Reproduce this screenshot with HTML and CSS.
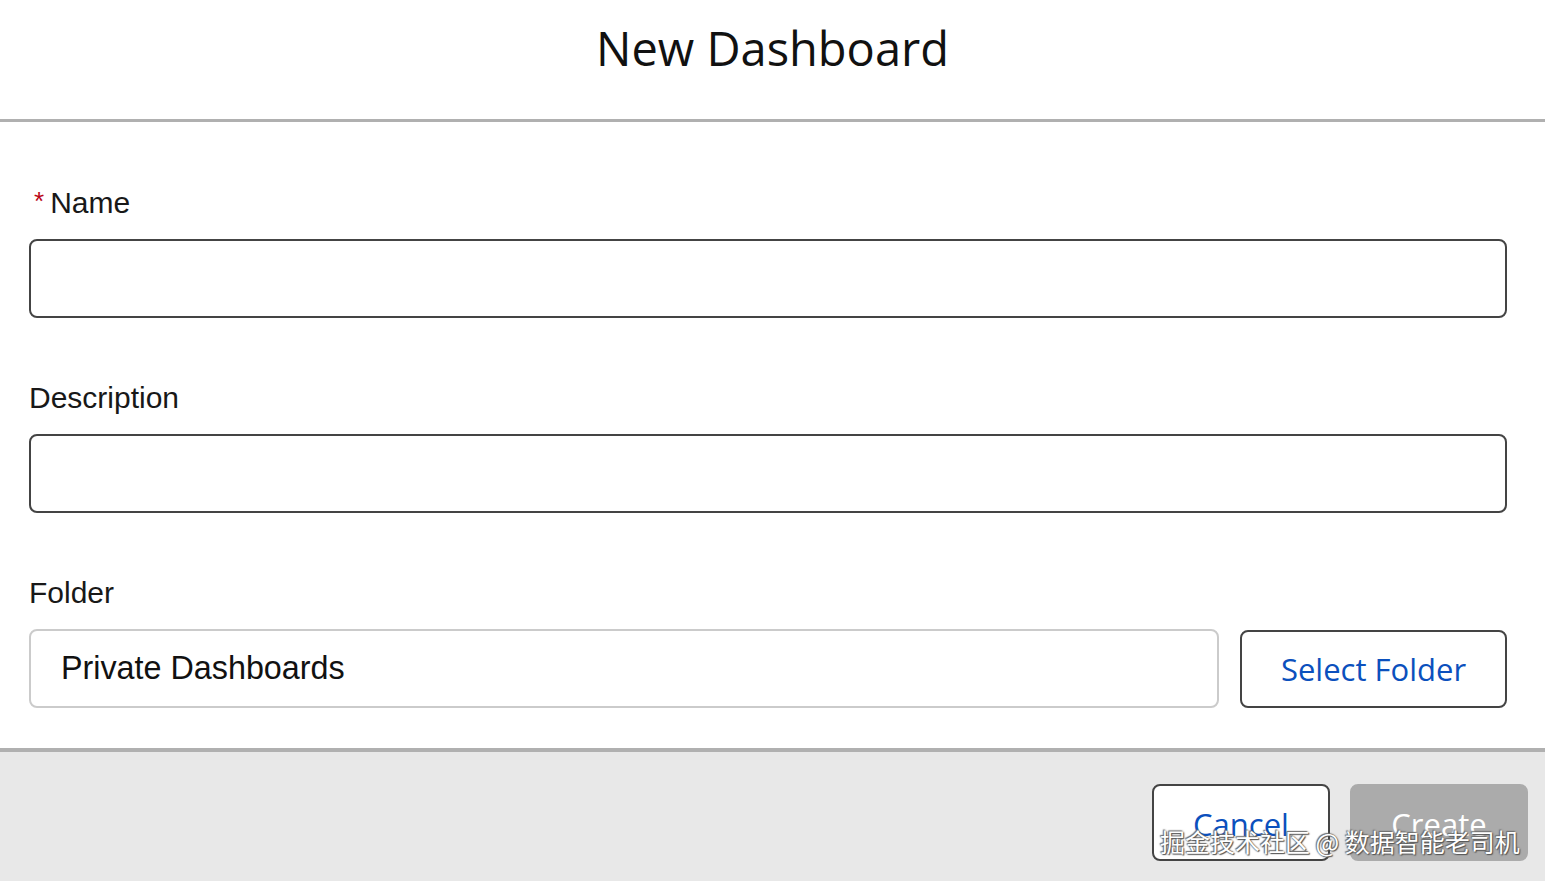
FILE: index.html
```html
<!DOCTYPE html>
<html lang="en">
<head>
<meta charset="utf-8">
<title>New Dashboard</title>
<link rel="stylesheet" href="styles.css">
</head>
<body>
<div class="modal">
  <header class="modal-header">
    <h1 class="modal-title">New Dashboard</h1>
  </header>
  <main class="modal-body">
    <div class="field">
      <label class="field-label"><abbr class="required" title="required">*</abbr>Name</label>
      <input class="text-input" type="text">
    </div>
    <div class="field">
      <label class="field-label">Description</label>
      <input class="text-input" type="text">
    </div>
    <div class="field">
      <label class="field-label">Folder</label>
      <div class="folder-row">
        <div class="folder-input">Private Dashboards</div>
        <button class="btn btn-neutral btn-folder" type="button">Select Folder</button>
      </div>
    </div>
  </main>
  <footer class="modal-footer">
    <button class="btn btn-neutral btn-footer" type="button">Cancel</button>
    <button class="btn btn-disabled btn-footer" type="button">Create</button>
    <div class="watermark">掘金技术社区 @ 数据智能老司机</div>
  </footer>
</div>
</body>
</html>
```

FILE: styles.css
```css
html, body {
  margin: 0;
  padding: 0;
  background: #ffffff;
}

.modal {
  width: 1545px;
  height: 881px;
  display: flex;
  flex-direction: column;
  overflow: hidden;
}

.modal-header {
  height: 119px;
  flex: none;
  border-bottom: 3px solid #b0b0b0;
  display: flex;
  justify-content: center;
  align-items: flex-start;
}

.modal-title {
  margin: 0;
  padding-top: 15px;
  font-family: "Open Sans", "Noto Sans", sans-serif;
  font-weight: 400;
  font-size: 47px;
  line-height: 66px;
  color: #111111;
}

.modal-body {
  padding: 64px 38px 40px 29px;
  display: flex;
  flex-direction: column;
  gap: 63px;
}

.field {
  display: flex;
  flex-direction: column;
  gap: 19px;
}

.field-label {
  font-family: "Liberation Sans", Arial, sans-serif;
  font-size: 30px;
  line-height: 34px;
  color: #181818;
  display: block;
}

.required {
  color: #ba0517;
  text-decoration: none;
  border: 0;
  font-size: 26px;
  line-height: 0;
  margin: 0 6px 0 5px;
  position: relative;
  top: -3px;
}

.text-input {
  box-sizing: border-box;
  width: 100%;
  height: 79px;
  margin: 0;
  border: 2px solid #444444;
  border-radius: 8px;
  background: #ffffff;
  font-family: "Liberation Sans", Arial, sans-serif;
  font-size: 32px;
  padding: 0 30px;
  outline: none;
}

.folder-row {
  display: flex;
  gap: 21px;
  align-items: flex-start;
}

.folder-input {
  box-sizing: border-box;
  flex: 1;
  height: 79px;
  border: 2px solid #cbcbcb;
  border-radius: 8px;
  padding: 0 30px;
  display: flex;
  align-items: center;
  font-family: "Liberation Sans", Arial, sans-serif;
  font-size: 32.3px;
  color: #111111;
}

.btn {
  box-sizing: border-box;
  margin: 0;
  border-radius: 8px;
  font-family: "Open Sans", "Noto Sans", sans-serif;
  font-weight: 400;
  font-size: 31px;
  display: flex;
  align-items: center;
  justify-content: center;
  padding: 0;
  cursor: pointer;
}

.btn-neutral {
  background: #ffffff;
  border: 2px solid #444444;
  color: #0b50bd;
}

.btn-folder {
  width: 267px;
  height: 78px;
  margin-top: 1px;
}

.modal-footer {
  position: relative;
  flex: 1;
  background: #e8e8e8;
  border-top: 4px solid #b0b0b0;
  display: flex;
  justify-content: flex-end;
  align-items: flex-start;
  gap: 20px;
  padding: 32px 17px 0 0;
}

.btn-footer {
  width: 178px;
  height: 77px;
  padding-top: 2px;
}

.btn-disabled {
  background: #ababab;
  border: 2px solid #ababab;
  color: #ffffff;
  cursor: default;
}

.watermark {
  position: absolute;
  left: 1160px;
  top: 72px;
  font-family: "Noto Sans CJK SC", sans-serif;
  font-size: 25px;
  line-height: 34px;
  color: #ffffff;
  white-space: nowrap;
  text-shadow: 0 0 2px #555555, 1px 1px 1px #555555, -1px -1px 1px #777777;
  pointer-events: none;
}
```
